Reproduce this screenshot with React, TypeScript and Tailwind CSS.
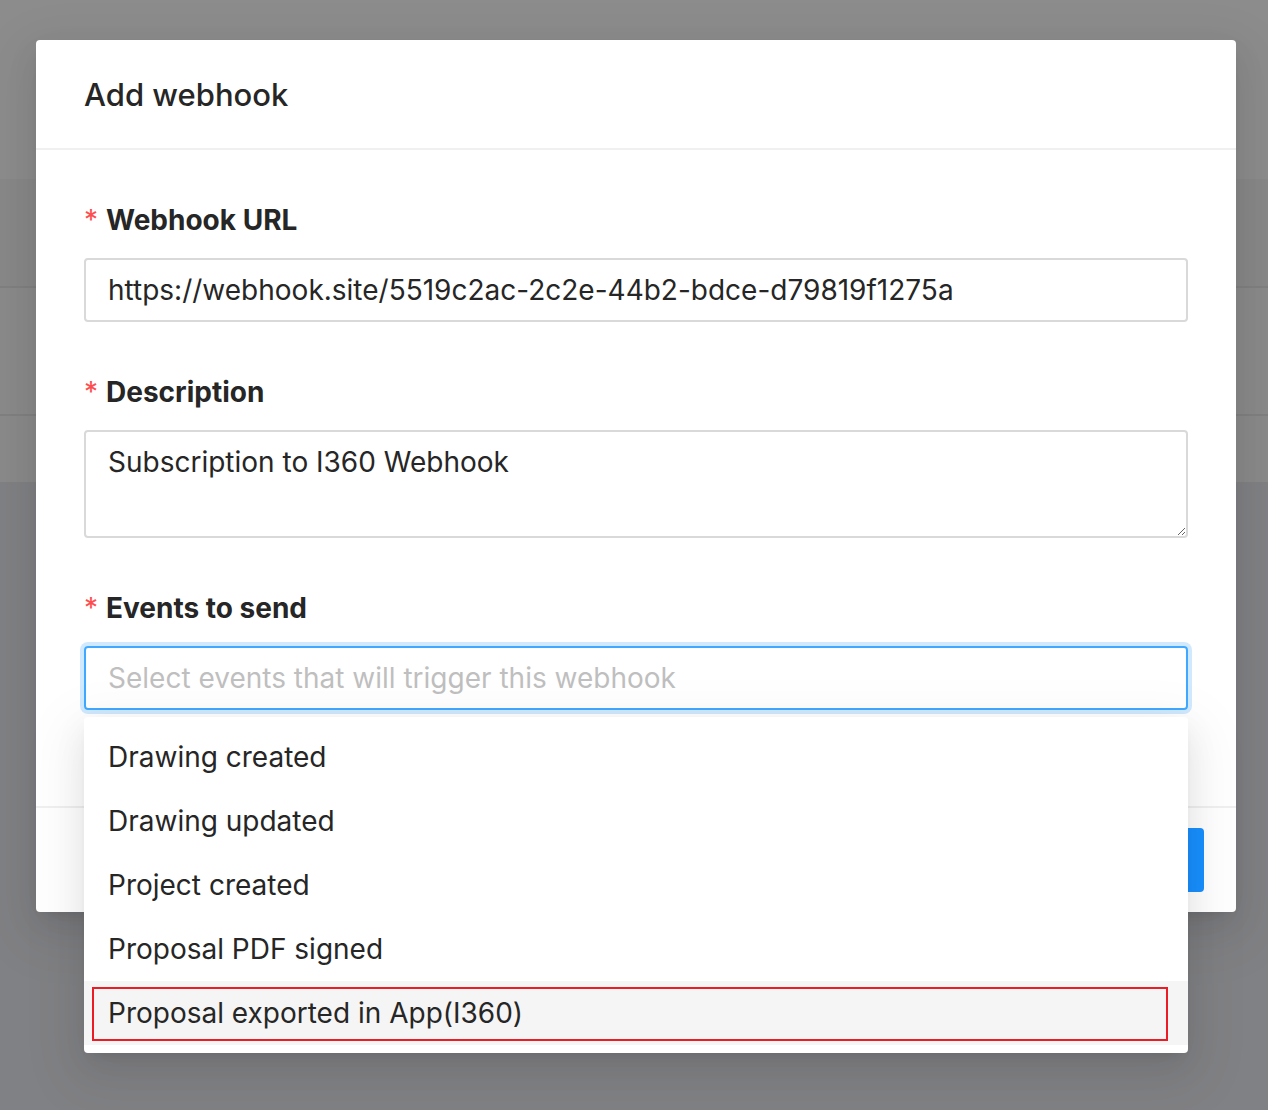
import React from 'react';

const events = [
  'Drawing created',
  'Drawing updated',
  'Project created',
  'Proposal PDF signed',
  'Proposal exported in App(I360)',
];

function Label({ children }: { children: React.ReactNode }) {
  return (
    <div className="flex h-[44px] items-center text-[28px] font-bold text-[#262626]">
      <span className="mr-[8px] text-[28px] font-normal text-[#ff4d4f]">*</span>
      {children}
    </div>
  );
}

export default function App() {
  return (
    <div
      className="relative h-[1110px] w-full overflow-hidden bg-[#808184]"
      style={{ fontFamily: 'Inter, "Noto Sans", sans-serif' }}
    >
      {/* dimmed page behind the modal */}
      <div className="flex flex-col">
        <div className="h-[179px] bg-[#8c8c8c]" />
        <div className="h-[109px] border-b-2 border-[#808080] bg-[#888888]" />
        <div className="h-[128px] border-b-2 border-[#808080] bg-[#8a8a8a]" />
        <div className="h-[66px] bg-[#8a8a8a]" />
      </div>

      {/* modal */}
      <div className="absolute left-[36px] top-[40px] w-[1200px] rounded-[4px] bg-white shadow-[0_6px_12px_-8px_rgba(0,0,0,0.12),0_12px_32px_0_rgba(0,0,0,0.08),0_18px_56px_16px_rgba(0,0,0,0.05)]">
        <div className="border-b-2 border-[#f0f0f0] px-[48px] pb-[31px] pt-[33px]">
          <div className="text-[31px] font-medium leading-[44px] text-[#262626]">Add webhook</div>
        </div>

        <div className="flex flex-col gap-[48px] px-[48px] pb-[96px] pt-[48px]">
          <div className="flex flex-col gap-[16px]">
            <Label>Webhook URL</Label>
            <div className="flex h-[64px] items-center rounded-[4px] border-2 border-[#d9d9d9] px-[22px] text-[28px] text-[#262626]">
              https://webhook.site/5519c2ac-2c2e-44b2-bdce-d79819f1275a
            </div>
          </div>

          <div className="flex flex-col gap-[16px]">
            <Label>Description</Label>
            <textarea
              readOnly
              defaultValue="Subscription to I360 Webhook"
              className="h-[108px] resize-y rounded-[4px] border-2 border-[#d9d9d9] px-[22px] py-[8px] text-[28px] leading-[44px] text-[#262626] outline-none"
            />
          </div>

          <div className="flex flex-col gap-[16px]">
            <Label>Events to send</Label>
            <div className="relative">
              <div className="flex h-[64px] items-center rounded-[4px] border-2 border-[#40a9ff] px-[22px] text-[28px] text-[#bfbfbf] shadow-[0_0_0_4px_rgba(24,144,255,0.2)]">
                Select events that will trigger this webhook
              </div>

              <div className="absolute left-0 right-0 top-[71px] z-20 rounded-[4px] bg-white py-[8px] shadow-[0_6px_12px_-8px_rgba(0,0,0,0.12),0_12px_32px_0_rgba(0,0,0,0.08),0_18px_56px_16px_rgba(0,0,0,0.05)]">
                {events.map((e, i) => (
                  <div
                    key={e}
                    className={
                      i === events.length - 1
                        ? 'relative flex h-[64px] items-center bg-[#f5f5f5] px-[24px] text-[28px] text-[#262626]'
                        : 'flex h-[64px] items-center px-[24px] text-[28px] text-[#262626]'
                    }
                  >
                    {e}
                    {i === events.length - 1 && (
                      <div className="pointer-events-none absolute bottom-[4px] left-[8px] right-[20px] top-[6px] border-2 border-[#ed1c24]" />
                    )}
                  </div>
                ))}
              </div>
            </div>
          </div>
        </div>

        <div className="flex justify-end gap-[16px] border-t-2 border-[#f0f0f0] px-[32px] py-[20px]">
          <button className="h-[64px] rounded-[4px] border-2 border-[#d9d9d9] bg-white px-[30px] text-[28px] text-[#262626]">
            Cancel
          </button>
          <button className="h-[64px] rounded-[4px] bg-[#1890ff] px-[30px] text-[28px] text-white">
            Add webhook
          </button>
        </div>
      </div>
    </div>
  );
}
